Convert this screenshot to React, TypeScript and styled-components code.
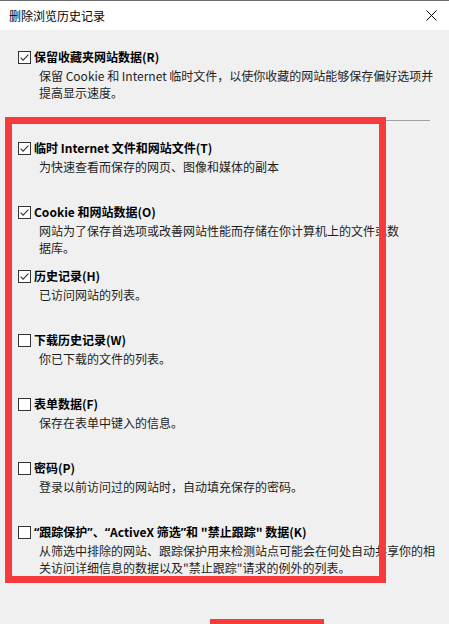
import React from 'react';
import styled, { createGlobalStyle } from 'styled-components';

const GlobalStyle = createGlobalStyle`
  html, body {
    margin: 0;
    padding: 0;
    background: #f0f0f0;
    overflow: hidden;
  }
  * {
    box-sizing: border-box;
  }
`;

const Window = styled.div`
  position: relative;
  width: 449px;
  height: 624px;
  overflow: hidden;
  background: #f0f0f0;
  font-family: 'Noto Sans CJK SC', 'Noto Sans', sans-serif;
  font-size: 12px;
  color: #000;
`;

const TitleBar = styled.header`
  height: 30px;
  display: flex;
  align-items: center;
  justify-content: space-between;
  padding: 0 8px 0 9px;
  background: #fff;
  border-top: 1px solid #6e6e6e;
`;

const Title = styled.span`
  font-size: 12px;
  line-height: 16px;
`;

const CloseBtn = styled.button`
  width: 24px;
  height: 24px;
  display: flex;
  align-items: center;
  justify-content: center;
  border: 0;
  background: transparent;
  padding: 0;
  margin-right: -2px;
`;

const Body = styled.div`
  padding: 17px 0 0 18px;
`;

const Option = styled.div<{ $fixed?: boolean }>`
  display: flex;
  flex-direction: column;
  height: ${(p) => (p.$fixed ? '64px' : 'auto')};
`;

const LabelRow = styled.label`
  display: flex;
  align-items: center;
  gap: 3px;
  height: 20px;
`;

const LabelText = styled.span`
  font-weight: 700;
  line-height: 20px;
  white-space: nowrap;
`;

// curly quotes in the Latin face are narrow, as in the original dialog
const Q = styled.span`
  font-family: 'Noto Sans', sans-serif;
`;

const Desc = styled.div`
  padding-left: 21px;
  line-height: 17px;
  color: #1e1e1e;
  white-space: nowrap;
`;

const Separator = styled.hr`
  margin: 19px 19px 17px -3px;
  border: 0;
  height: 1px;
  background: #a0a0a0;
`;

const OptionList = styled.div`
  display: flex;
  flex-direction: column;
`;

const Highlight = styled.div<{ $x: number; $y: number; $w: number; $h: number }>`
  position: absolute;
  left: ${(p) => p.$x}px;
  top: ${(p) => p.$y}px;
  width: ${(p) => p.$w}px;
  height: ${(p) => p.$h}px;
  border: 7px solid #f73b3c;
  pointer-events: none;
`;

function CheckBox({ checked }: { checked: boolean }) {
  return (
    <svg width="13" height="13" viewBox="0 0 13 13">
      <rect x="0.5" y="0.5" width="12" height="12" fill="#fff" stroke="#333" />
      {checked && (
        <path d="M2.6 6.6 L5.1 9.2 L10.4 3.6" fill="none" stroke="#333" strokeWidth="1.1" />
      )}
    </svg>
  );
}

interface Item {
  id: string;
  label: React.ReactNode;
  lines: string[];
  checked: boolean;
}

const items: Item[] = [
  { id: 't', label: '临时 Internet 文件和网站文件(T)', lines: ['为快速查看而保存的网页、图像和媒体的副本'], checked: true },
  {
    id: 'o',
    label: 'Cookie 和网站数据(O)',
    lines: ['网站为了保存首选项或改善网站性能而存储在你计算机上的文件或数', '据库。'],
    checked: true,
  },
  { id: 'h', label: '历史记录(H)', lines: ['已访问网站的列表。'], checked: true },
  { id: 'w', label: '下载历史记录(W)', lines: ['你已下载的文件的列表。'], checked: false },
  { id: 'f', label: '表单数据(F)', lines: ['保存在表单中键入的信息。'], checked: false },
  { id: 'p', label: '密码(P)', lines: ['登录以前访问过的网站时，自动填充保存的密码。'], checked: false },
  {
    id: 'k',
    label: (
      <>
        <Q>“</Q>跟踪保护<Q>”</Q>、<Q>“</Q>ActiveX 筛选<Q>”</Q>和 "禁止跟踪" 数据(K)
      </>
    ),
    lines: [
      '从筛选中排除的网站、跟踪保护用来检测站点可能会在何处自动共享你的相',
      '关访问详细信息的数据以及"禁止跟踪"请求的例外的列表。',
    ],
    checked: false,
  },
];

function OptionBlock({ item, fixed }: { item: Item; fixed?: boolean }) {
  return (
    <Option $fixed={fixed}>
      <LabelRow>
        <CheckBox checked={item.checked} />
        <LabelText>{item.label}</LabelText>
      </LabelRow>
      {item.lines.map((l) => (
        <Desc key={l}>{l}</Desc>
      ))}
    </Option>
  );
}

export default function App() {
  return (
    <Window>
      <GlobalStyle />
      <TitleBar>
        <Title>删除浏览历史记录</Title>
        <CloseBtn aria-label="关闭">
          <svg width="11" height="11" viewBox="0 0 11 11">
            <path d="M0.5 0.5 L10.5 10.5 M10.5 0.5 L0.5 10.5" stroke="#000" strokeWidth="1" />
          </svg>
        </CloseBtn>
      </TitleBar>
      <Body>
        <OptionBlock
          item={{
            id: 'r',
            label: '保留收藏夹网站数据(R)',
            lines: ['保留 Cookie 和 Internet 临时文件，以使你收藏的网站能够保存偏好选项并', '提高显示速度。'],
            checked: true,
          }}
        />
        <Separator />
        <OptionList>
          {items.map((it) => (
            <OptionBlock key={it.id} item={it} fixed />
          ))}
        </OptionList>
      </Body>
      <Highlight $x={5} $y={117} $w={381} $h={466} />
      <Highlight $x={210} $y={619} $w={114} $h={40} />
    </Window>
  );
}
